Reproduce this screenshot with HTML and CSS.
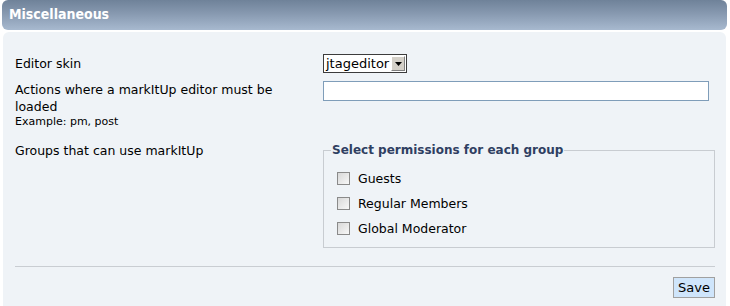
FILE: index.html
```html
<!DOCTYPE html>
<html>
<head>
<meta charset="utf-8">
<link rel="stylesheet" href="styles.css">
</head>
<body>
<div class="box">
  <div class="header">Miscellaneous</div>
  <div class="panel">
    <div class="row row-skin">
      <div class="label">Editor skin</div>
      <div class="field">
        <div class="select"><span class="sel-text">jtageditor</span><span class="sel-btn"><svg width="7" height="4" viewBox="0 0 7 4"><path d="M0 0H7L3.5 4Z" fill="#000"/></svg></span></div>
      </div>
    </div>
    <div class="row row-actions">
      <div class="label">Actions where a markItUp editor must be loaded<div class="hint">Example: pm, post</div></div>
      <div class="field"><div class="input"></div></div>
    </div>
    <div class="row row-groups">
      <div class="label">Groups that can use markItUp</div>
      <div class="field">
        <fieldset class="perms">
          <legend>Select permissions for each group</legend>
          <div class="check"><span class="cb"></span>Guests</div>
          <div class="check"><span class="cb"></span>Regular Members</div>
          <div class="check"><span class="cb"></span>Global Moderator</div>
        </fieldset>
      </div>
    </div>
    <div class="sep"></div>
    <div class="actions"><span class="btn">Save</span></div>
  </div>
</div>
</body>
</html>
```

FILE: styles.css
```css
html, body {
  margin: 0;
  padding: 0;
  background: #ffffff;
}
body {
  font-family: "DejaVu Sans", Verdana, sans-serif;
  font-size: 12.5px;
  color: #000;
}
.box {
  width: 725px;
  margin-left: 2px;
}
.header {
  height: 30px;
  box-sizing: border-box;
  padding: 6px 0 0 7px;
  border-radius: 6px;
  background: linear-gradient(to bottom, #6f8299 0%, #8799b0 45%, #a7b9cf 100%);
  color: #fff;
  font-family: "DejaVu Sans Condensed", "DejaVu Sans", sans-serif;
  font-weight: bold;
  font-size: 14px;
}
.panel {
  margin-top: 2px;
  margin-left: 1px;
  width: 723px;
  background: #eff3f7;
  border-radius: 6px 6px 0 0;
  padding: 22px 11px 8px 12px;
  box-sizing: border-box;
  height: 274px;
}
.row {
  display: flex;
}
.label {
  width: 308px;
  box-sizing: border-box;
  padding-right: 24px;
  flex: none;
  line-height: 17px;
}
.field {
  flex: 1;
}
.row-skin .label {
  padding-top: 1px;
}
.select {
  display: inline-flex;
  width: 84px;
  height: 19px;
  box-sizing: border-box;
  border: 1px solid #3c3c3c;
  background: #fff;
  font-size: 13px;
}
.sel-text {
  flex: 1;
  line-height: 17px;
  padding-left: 2px;
  overflow: hidden;
  white-space: nowrap;
}
.sel-btn {
  width: 14px;
  flex: none;
  margin: 1px 1px 1px 0;
  box-sizing: border-box;
  border: 1px solid #ffffff;
  border-right-color: #808080;
  border-bottom-color: #808080;
  background: #d4d0c8;
  display: flex;
  align-items: center;
  justify-content: center;
}
.row-actions {
  margin-top: 8px;
}
.hint {
  font-size: 11px;
  line-height: 14px;
}
.input {
  width: 386px;
  height: 20px;
  box-sizing: border-box;
  border: 1px solid #7f9db9;
  background: #fff;
}
.row-groups {
  margin-top: 13px;
}
.perms {
  margin: 0;
  width: 392px;
  box-sizing: border-box;
  border: 1px solid #c8ccd1;
  padding: 7px 0 6px 13px;
}
.perms legend {
  padding: 0 1px;
  margin-left: -6px;
  font-weight: bold;
  font-size: 12px;
  line-height: 17px;
  color: #2f3f62;
}
.check {
  display: flex;
  align-items: center;
  height: 25px;
}
.cb {
  width: 13px;
  height: 13px;
  box-sizing: border-box;
  border: 1px solid #8a8a8a;
  background: linear-gradient(135deg, #d8d8d8, #f8f8f8);
  margin-right: 8px;
  flex: none;
}
.sep {
  margin-top: 18px;
  height: 1px;
  background: #c9cdd2;
  width: 700px;
}
.actions {
  display: flex;
  justify-content: flex-end;
  margin-top: 10px;
}
.btn {
  display: inline-block;
  width: 42px;
  height: 21px;
  box-sizing: border-box;
  border: 1px solid #a0a0a0;
  background: #cfe5fb;
  font-size: 13px;
  line-height: 19px;
  text-align: center;
}
```
